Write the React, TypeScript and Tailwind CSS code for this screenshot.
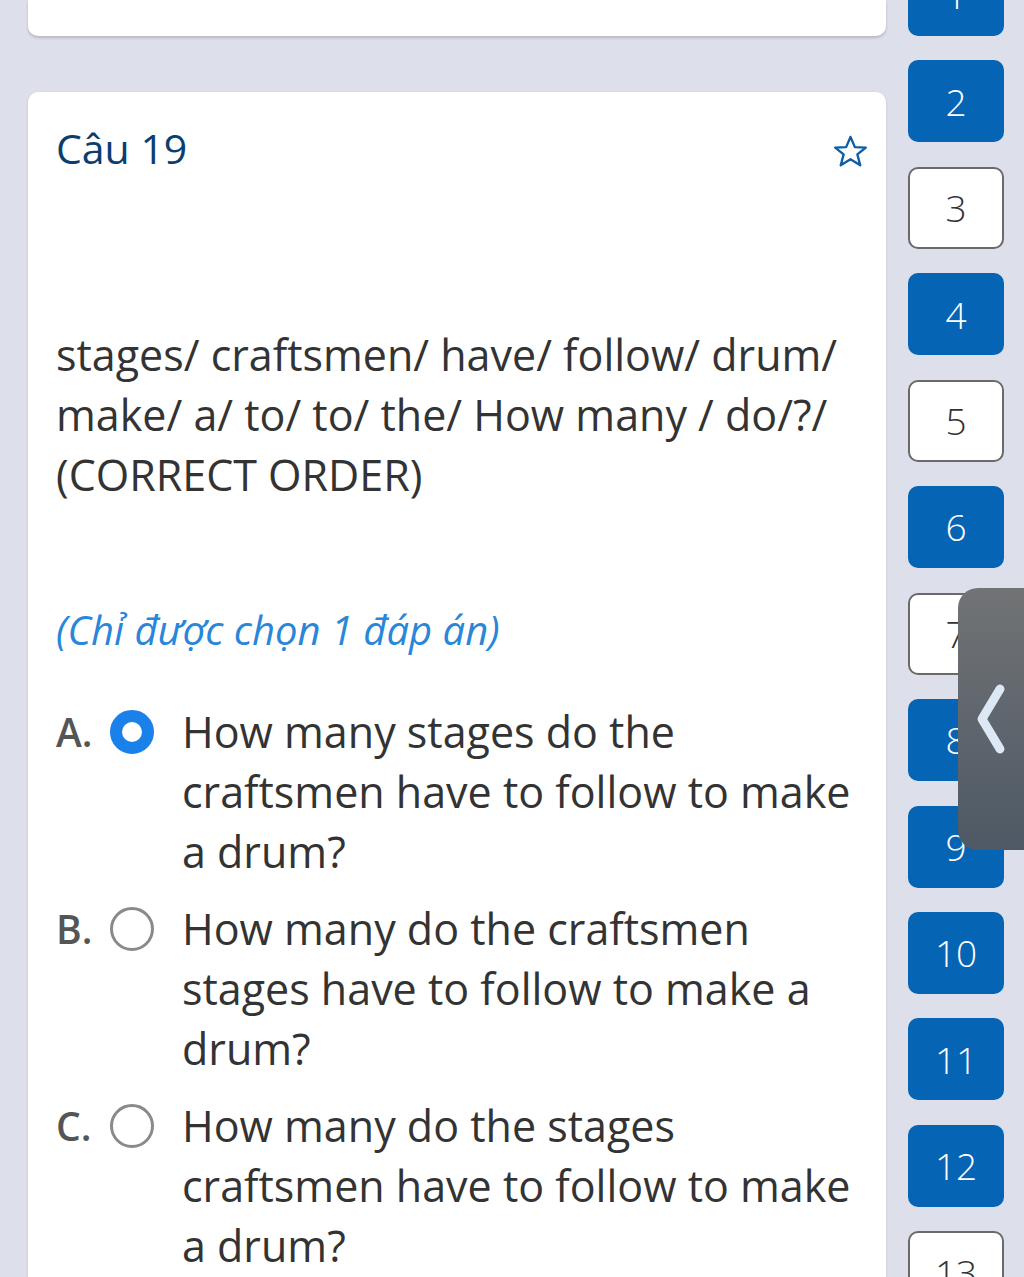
import React from "react";

const nums = [1, 2, 3, 4, 5, 6, 7, 8, 9, 10, 11, 12, 13];
const outlined = new Set([3, 5, 7, 13]);

function Radio({ selected }: { selected: boolean }) {
  return selected ? (
    <div className="w-[44px] h-[44px] rounded-full border-[12px] border-[#1a80ea] bg-white shrink-0" />
  ) : (
    <div className="w-[44px] h-[44px] rounded-full border-[3px] border-[#8a8a8a] bg-white shrink-0" />
  );
}

function Option({ label, text, selected }: { label: string; text: string; selected?: boolean }) {
  return (
    <div className="flex items-start">
      <div className="w-[54px] shrink-0 text-[39px] leading-[60px] font-semibold text-[#555]">{label}</div>
      <div className="h-[60px] flex items-center w-[72px] shrink-0">
        <Radio selected={!!selected} />
      </div>
      <div className="text-[43px] leading-[60px] text-[#333]">{text}</div>
    </div>
  );
}

export default function App() {
  return (
    <div
      className="relative w-[1024px] h-[1277px] overflow-hidden bg-[#dde0ea] flex"
      style={{ fontFamily: '"Open Sans", "Noto Sans", sans-serif' }}
    >
      <div className="ml-[28px] w-[858px] flex flex-col">
        <div className="h-[36px] shrink-0 bg-white rounded-b-[10px] shadow-[0_2px_3px_rgba(0,0,0,0.18)]" />
        <div className="mt-[56px] shrink-0 bg-white rounded-[10px] pl-[28px] pr-[24px] pt-[30px] pb-[40px] flex-1 shadow-[0_1px_3px_rgba(0,0,0,0.12)]">
          <div className="flex items-start justify-between">
            <div className="text-[41px] leading-[52px] text-[#0b3e70] font-medium">Câu 19</div>
            <svg
              className="mt-[12px] mr-[-6px]"
              width="35"
              height="35"
              viewBox="0 0 24 24"
              fill="none"
              stroke="#0d5ea8"
              strokeWidth="1.6"
              strokeLinejoin="round"
            >
              <polygon points="12,2 15,9 22.5,9.3 16.7,14 18.7,21.5 12,17.3 5.3,21.5 7.3,14 1.5,9.3 9,9" />
            </svg>
          </div>
          <div className="mt-[151px] text-[43px] leading-[60px] text-[#333]">
            stages/ craftsmen/ have/ follow/ drum/ make/ a/ to/ to/ the/ How many / do/?/ (CORRECT ORDER)
          </div>
          <div className="mt-[95px] text-[40px] leading-[60px] italic text-[#2a86d8]">(Chỉ được chọn 1 đáp án)</div>
          <div className="mt-[42px] flex flex-col gap-[17px]">
            <Option label="A." text="How many stages do the craftsmen have to follow to make a drum?" selected />
            <Option label="B." text="How many do the craftsmen stages have to follow to make a drum?" />
            <Option label="C." text="How many do the stages craftsmen have to follow to make a drum?" />
          </div>
        </div>
      </div>
      <div className="ml-[22px] w-[96px] mt-[-46px] flex flex-col gap-[24.45px]">
        {nums.map((n) =>
          outlined.has(n) ? (
            <div
              key={n}
              className="h-[82px] shrink-0 rounded-[10px] border-2 border-[#6a6a6a] bg-white flex items-center justify-center text-[37px] font-light text-[#333]"
            >
              {n}
            </div>
          ) : (
            <div
              key={n}
              className="h-[82px] shrink-0 rounded-[10px] bg-[#0565b4] flex items-center justify-center text-[37px] font-light text-white"
            >
              {n}
            </div>
          )
        )}
      </div>
      <div className="absolute left-[958px] top-[588px] w-[80px] h-[262px] rounded-l-[20px] bg-gradient-to-b from-[#717375] to-[#4e5965] flex items-center">
        <svg width="40" height="80" viewBox="0 0 40 80" className="ml-[16px]" fill="none">
          <polyline points="26,10 8,40 26,70" stroke="#dde8f7" strokeWidth="9" strokeLinecap="round" strokeLinejoin="round" />
        </svg>
      </div>
    </div>
  );
}
